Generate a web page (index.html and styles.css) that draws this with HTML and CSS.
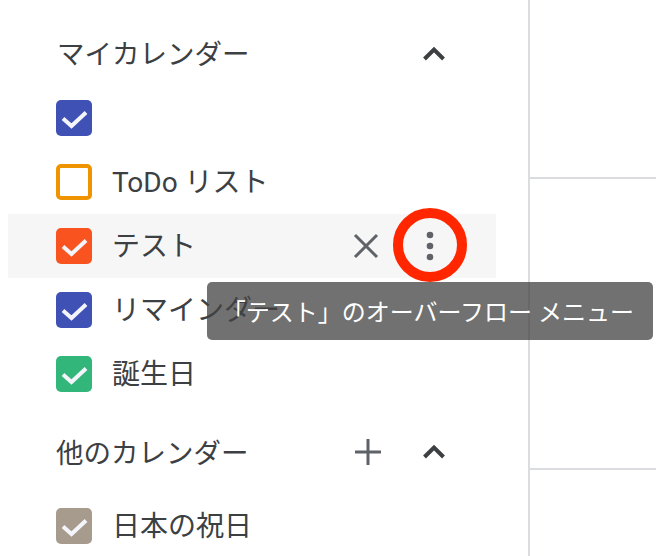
FILE: index.html
```html
<!DOCTYPE html>
<html lang="ja">

<head>
    <meta charset="UTF-8">
    <meta name="viewport" content="width=device-width, initial-scale=1.0">
    <title>カレンダー</title>
    <link rel="stylesheet" href="styles.css">
</head>

<body>
    <div class="page">
        <div class="sidebar">
            <div class="heading first">
                <span class="heading_text">マイカレンダー</span>
                <svg class="icon chevron" viewBox="0 0 48 48"><path d="M14.5 29 24 19.5 33.5 29"/></svg>
            </div>
            <div class="row">
                <span class="check indigo"><svg viewBox="0 0 36 36"><path d="M7 18.5l8.500 7.500L30 12.500"/></svg></span>
            </div>
            <div class="row">
                <span class="check empty"></span>
                <span class="label">ToDo リスト</span>
            </div>
            <div class="row active">
                <span class="check tangerine"><svg viewBox="0 0 36 36"><path d="M7 18.5l8.500 7.500L30 12.500"/></svg></span>
                <span class="label">テスト</span>
                <svg class="icon cross" viewBox="0 0 48 48"><path d="M13 13l22 22M35 13 13 35"/></svg>
                <svg class="icon dots" viewBox="0 0 48 48"><circle cx="24" cy="13" r="3.3"/><circle cx="24" cy="24" r="3.3"/><circle cx="24" cy="35" r="3.3"/></svg>
                <span class="ring"></span>
            </div>
            <div class="row">
                <span class="check indigo"><svg viewBox="0 0 36 36"><path d="M7 18.5l8.500 7.500L30 12.500"/></svg></span>
                <span class="label">リマインダー</span>
            </div>
            <div class="row">
                <span class="check green"><svg viewBox="0 0 36 36"><path d="M7 18.5l8.500 7.500L30 12.500"/></svg></span>
                <span class="label">誕生日</span>
            </div>
            <div class="heading second">
                <span class="heading_text">他のカレンダー</span>
                <svg class="icon plus" viewBox="0 0 48 48"><path d="M24 11v26M11 24h26"/></svg>
                <svg class="icon chevron" viewBox="0 0 48 48"><path d="M14.5 29 24 19.5 33.5 29"/></svg>
            </div>
            <div class="row">
                <span class="check brown"><svg viewBox="0 0 36 36"><path d="M7 18.5l8.500 7.500L30 12.500"/></svg></span>
                <span class="label">日本の祝日</span>
            </div>
        </div>
        <div class="grid">
            <div class="cell top"></div>
            <div class="cell middle"></div>
            <div class="cell"></div>
        </div>
    </div>
    <div class="tooltip">「テスト」のオーバーフロー メニュー</div>
</body>

</html>
```

FILE: styles.css
```css
html,
body {
    margin: 0;
    height: 100%;
    overflow: hidden;
    background: #fff;
}

body {
    font-family: Roboto, "Noto Sans CJK JP", sans-serif;
    color: #3c4043;
}

.page {
    display: flex;
    height: 556px;
}

.sidebar {
    width: 528px;
    flex-shrink: 0;
    padding-top: 22px;
    box-sizing: border-box;
}

.grid {
    flex: 1;
    display: flex;
    flex-direction: column;
    border-left: 2px solid #dadce0;
}

.cell {
    flex: 1;
}

.cell.top {
    flex: none;
    height: 177px;
    border-bottom: 2px solid #dadce0;
}

.cell.middle {
    flex: none;
    height: 289px;
    border-bottom: 2px solid #dadce0;
}

.heading {
    display: flex;
    align-items: center;
    height: 64px;
    width: 458px;
    padding-left: 57px;
    box-sizing: border-box;
    font-size: 27.5px;
}

.heading.second {
    margin: 14px 0 10px;
    padding-left: 56px;
}

.heading_text {
    flex: 1;
    padding-bottom: 4px;
    color: #3c4043;
}

.second .heading_text {
    padding-bottom: 2px;
}

.row {
    position: relative;
    display: flex;
    align-items: center;
    height: 64px;
    width: 488px;
    margin-left: 8px;
    padding: 0 42px 0 48px;
    box-sizing: border-box;
    font-size: 28px;
}

.row.active {
    background: #f6f6f6;
}

.label {
    flex: 1;
    margin-left: 20px;
    padding-bottom: 4px;
    white-space: nowrap;
}

.check {
    width: 36px;
    height: 36px;
    flex-shrink: 0;
    box-sizing: border-box;
    border-radius: 5px;
}

.check svg {
    display: block;
    width: 36px;
    height: 36px;
    fill: none;
    stroke: #f4f4fb;
    stroke-width: 4;
}

.check.empty {
    border: 4px solid #f09300;
}

.indigo {
    background: #3f51b5;
}

.tangerine {
    background: #f9541f;
}

.green {
    background: #33b679;
}

.brown {
    background: #a79b8e;
}

.icon {
    width: 48px;
    height: 48px;
    flex-shrink: 0;
}

.chevron path {
    fill: none;
    stroke: #3c4043;
    stroke-width: 4;
}

.plus {
    margin-right: 18px;
}

.plus path,
.cross path {
    fill: none;
    stroke: #5f6368;
    stroke-width: 3;
}

.cross {
    margin-right: 16px;
}

.dots circle {
    fill: #5f6368;
}

/* 红圈 */
.ring {
    position: absolute;
    left: 385px;
    top: -6px;
    width: 74px;
    height: 74px;
    box-sizing: border-box;
    border: 10px solid #ff2600;
    border-radius: 50%;
}

.tooltip {
    position: absolute;
    left: 207px;
    top: 282px;
    width: 446px;
    height: 58px;
    box-sizing: border-box;
    padding: 0 19px 2px 0;
    display: flex;
    align-items: center;
    justify-content: flex-end;
    border-radius: 5px;
    background: rgba(66, 66, 66, 0.75);
    color: #fff;
    font-size: 24px;
    white-space: nowrap;
}
```
